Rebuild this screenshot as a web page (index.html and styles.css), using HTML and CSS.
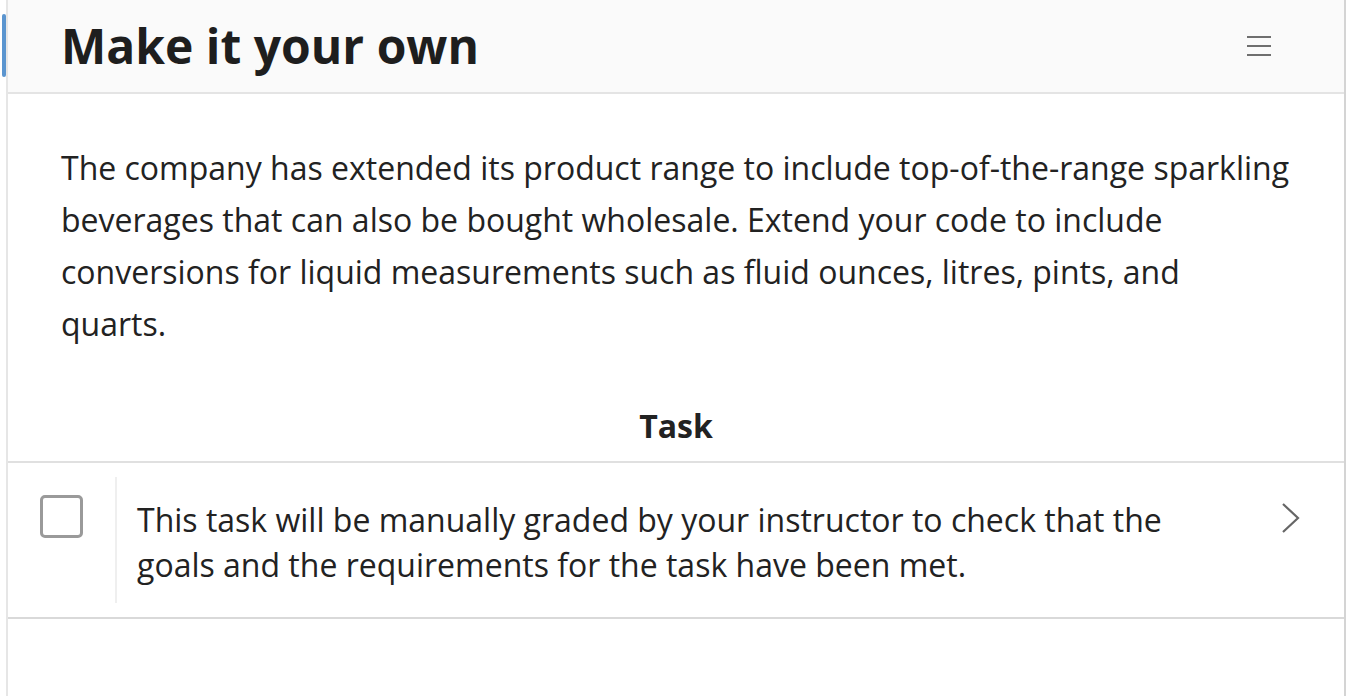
FILE: index.html
```html
<!DOCTYPE html>
<html>
<head>
<meta charset="utf-8">
<link rel="stylesheet" href="styles.css">
</head>
<body>
<div class="page">
  <div class="accent"></div>
  <div class="panel">
    <header class="header">
      <h1 class="title">Make it your own</h1>
      <button class="menu" aria-label="menu">
        <svg width="26" height="22" viewBox="0 0 26 22"><path d="M1 2h24M1 11h24M1 20h24" stroke="#6f6f6f" stroke-width="2" fill="none"/></svg>
      </button>
    </header>
    <div class="content">
      <p class="lead">The company has extended its product range to include top-of-the-range sparkling beverages that can also be bought wholesale. Extend your code to include conversions for liquid measurements such as fluid ounces, litres, pints, and quarts.</p>
      <h2 class="task-title">Task</h2>
    </div>
    <div class="task">
      <div class="check-col"><span class="checkbox"></span></div>
      <div class="task-text">This task will be manually graded by your instructor to check that the goals and the requirements for the task have been met.</div>
      <div class="chev">
        <svg width="20" height="32" viewBox="0 0 20 32"><path d="M2 2l15 14L2 30" stroke="#666" stroke-width="2.2" fill="none"/></svg>
      </div>
    </div>
  </div>
</div>
</body>
</html>
```
FILE: styles.css
```css
html, body { margin: 0; padding: 0; background: #fff; }
body { font-family: "Open Sans", "Noto Sans", sans-serif; color: #222; }
.page { position: relative; height: 696px; overflow: hidden; }
.accent { position: absolute; left: 2px; top: 14px; width: 4px; height: 63px; background: #5b95cf; border-radius: 2px; }
.panel { margin-left: 6px; margin-right: 0; height: 696px; border-left: 2px solid #e6e6e6; border-right: 2px solid #d4d4d4; box-sizing: border-box; }
.header { height: 92px; background: #fafafa; border-bottom: 2px solid #e4e4e4; display: flex; align-items: center; justify-content: space-between; padding: 0 72px 0 53px; box-sizing: content-box; }
.title { margin: 0; font-size: 48px; font-weight: 700; color: #1e1e1e; line-height: 1; padding-bottom: 1px; }
.menu { background: none; border: 0; padding: 0; display: flex; }
.content { padding: 0 53px; }
.lead { margin: 48px 0 0; font-size: 32px; line-height: 52px; color: #222; }
.task-title { margin: 52px 0 0; text-align: center; font-size: 32px; font-weight: 700; line-height: 48px; padding-bottom: 11px; }
.task { display: flex; border-top: 2px solid #e0e0e0; border-bottom: 2px solid #d9d9d9; padding: 14px 0; }
.check-col { width: 109px; flex: none; border-right: 2px solid #efefef; padding-top: 18px; box-sizing: border-box; padding-left: 32px; }
.checkbox { display: block; width: 37px; height: 37px; border: 3px solid #9a9a9a; border-radius: 5px; }
.task-text { flex: 1; padding: 20px 0 16px 20px; font-size: 32px; line-height: 45px; color: #222; }
.chev { width: 110px; flex: none; display: flex; justify-content: center; padding-top: 25px; padding-left: 4px; box-sizing: border-box; }
```
